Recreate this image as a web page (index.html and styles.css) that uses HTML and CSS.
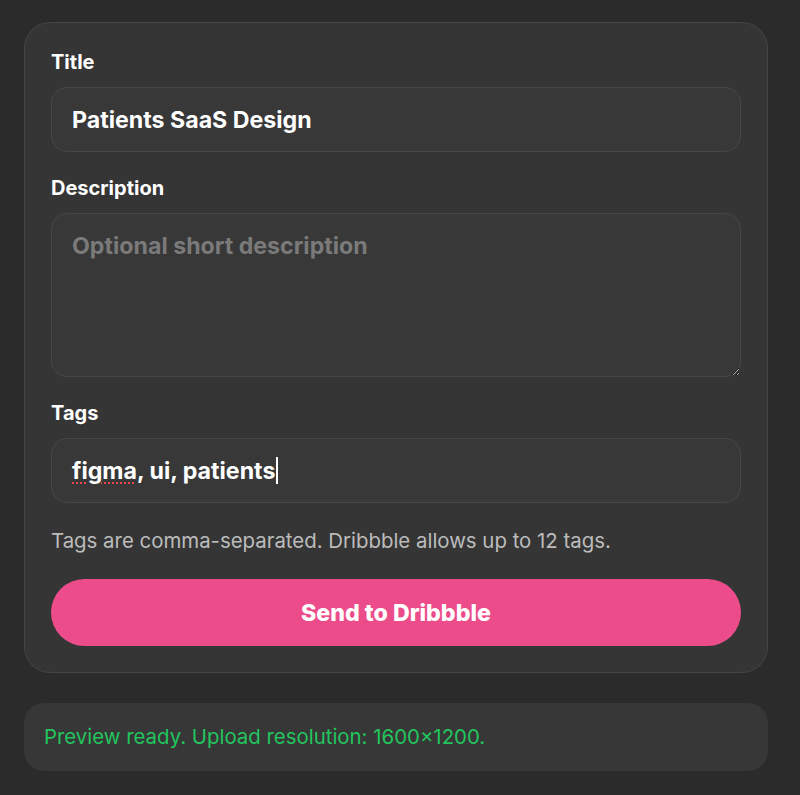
FILE: index.html
```html
<!DOCTYPE html>
<html lang="en">
<head>
<meta charset="utf-8">
<title>Send to Dribbble</title>
<link rel="stylesheet" href="styles.css">
</head>
<body>
<main class="wrap">
  <form class="card">
    <div class="field">
      <label class="label">Title</label>
      <div class="input"><span>Patients SaaS Design</span></div>
    </div>
    <div class="field">
      <label class="label">Description</label>
      <textarea class="textarea" placeholder="Optional short description"></textarea>
    </div>
    <div class="field">
      <label class="label">Tags</label>
      <div class="input"><span class="spell">figma</span>, ui, patients<span class="caret"></span></div>
    </div>
    <p class="hint">Tags are comma-separated. Dribbble allows up to 12 tags.</p>
    <button type="button" class="btn">Send to Dribbble</button>
  </form>
  <div class="status">Preview ready. Upload resolution: 1600×1200.</div>
</main>
</body>
</html>
```
FILE: styles.css
```css
* { box-sizing: border-box; }
html, body { margin: 0; background: #2b2b2b; }
body { font-family: Inter, "Noto Sans", sans-serif; color: #fff; }
.wrap {
  width: 744px;
  margin-left: 24px;
  padding-top: 22px;
  display: flex;
  flex-direction: column;
  gap: 30px;
}
.card {
  background: #353535;
  border: 1px solid #454545;
  border-radius: 26px;
  padding: 27px 26px 26px;
  display: flex;
  flex-direction: column;
  gap: 24px;
  margin: 0;
}
.field { display: flex; flex-direction: column; gap: 13px; }
.label { font-size: 20px; font-weight: 700; line-height: 24px; }
.input, .textarea {
  background: #383838;
  border: 1px solid #474747;
  border-radius: 16px;
  padding: 19px 20px;
  font-family: Inter, sans-serif;
  font-size: 23.2px;
  font-weight: 700;
  line-height: 26px;
  color: #fff;
  height: 65px;
  display: flex;
  align-items: center;
}
.textarea {
  display: block;
  height: 164px;
  width: 100%;
  resize: vertical;
  outline: none;
  margin: 0;
}
.textarea::placeholder { color: #7a7a7a; }
.spell {
  text-decoration: underline dotted #e5484d;
  text-decoration-thickness: 2px;
  text-underline-offset: 4px;
}
.caret {
  display: inline-block;
  width: 1.5px;
  height: 27px;
  background: #fff;
  margin-left: 1px;
}
.hint { margin: 0; font-size: 20.4px; line-height: 28px; color: #bcbcbc; }
.btn {
  height: 67px;
  border: none;
  border-radius: 34px;
  background: #ec4d8a;
  color: #fff;
  font-family: Inter, sans-serif;
  font-size: 23.2px;
  font-weight: 800;
}
.status {
  background: #373737;
  border-radius: 20px;
  padding: 20px;
  font-size: 20.4px;
  line-height: 28px;
  color: #22c55e;
}
```
